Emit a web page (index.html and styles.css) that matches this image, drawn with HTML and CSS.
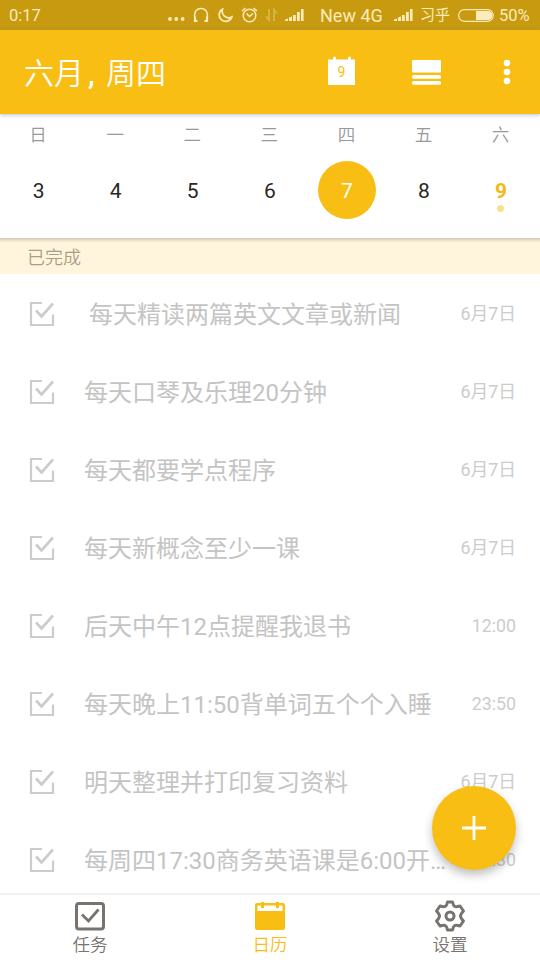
FILE: index.html
```html
<!DOCTYPE html>
<html lang="zh-CN">
<head>
<meta charset="utf-8">
<title>日历</title>
<link rel="stylesheet" href="styles.css">
</head>
<body>
<svg class="defs" width="0" height="0">
  <symbol id="check" viewBox="0 0 26 26"><path d="M13 2H2v22h22V13.500" fill="none" stroke="currentColor" stroke-width="2.200"/><path d="M7 9.500l5.500 6L24 2.500" fill="none" stroke="currentColor" stroke-width="2.700"/></symbol>
  <symbol id="signal" viewBox="0 0 19 14"><path d="M0 13v-1.500l3-1V13zM4 13V9.500l3-1V13zM8 13V7h2.800v6zM12 13V4h2.800v9zM16 13V1h2.600v12z" fill="currentColor"/></symbol>
</svg>
<div class="screen">
  <div class="status">
    <span class="clock">0:17</span>
    <svg class="dots" width="17" height="6" viewBox="0 0 17 6" fill="currentColor"><circle cx="2" cy="3" r="1.900"/><circle cx="8.300" cy="3" r="1.900"/><circle cx="14.600" cy="3" r="1.900"/></svg>
    <svg class="phones" width="16" height="16" viewBox="0 0 16 16" fill="none" stroke="currentColor" stroke-width="1.500"><path d="M2 12.500C.5 5 3.500 1.500 8 1.500s7.500 3.500 6 11"/><path d="M2 9.500v4.500h2.500M14 9.500v4.500h-2.500" stroke-width="2.200"/></svg>
    <svg class="moon" width="15" height="15" viewBox="0 0 15 15" fill="none" stroke="currentColor" stroke-width="1.700"><path d="M4.500 1.200A6.500 6.500 0 1 0 13.800 9C8 11.500 3 7 4.500 1.200z"/></svg>
    <svg class="alarm" width="17" height="16" viewBox="0 0 17 16" fill="none" stroke="currentColor" stroke-width="1.500"><circle cx="8.500" cy="8.500" r="6.300"/><path d="M5.500 6.500l3 3 3.500-3M1 4l3.500-3M16 4l-3.500-3"/></svg>
    <svg class="arrows" width="13" height="14" viewBox="0 0 13 14" fill="none" stroke="currentColor" stroke-width="2"><path d="M4 1v11L1 8.500M9 13V2l3 3.500"/></svg>
    <svg class="sig1" width="19" height="14"><use href="#signal"/></svg>
    <span class="net">New 4G</span>
    <svg class="sig2" width="19" height="14"><use href="#signal"/></svg>
    <span class="carrier">习乎</span>
    <svg class="battery" width="37" height="13" viewBox="0 0 37 13"><rect x=".7" y=".7" width="34.500" height="11.600" rx="5.500" fill="none" stroke="currentColor" stroke-width="1.200"/><path d="M18 2h12a4.500 4.500 0 0 1 0 9H18z" fill="currentColor"/></svg>
    <span class="percent">50%</span>
  </div>
  <header class="appbar">
    <h1>六月<span class="comma">,</span>周四</h1>
    <svg class="today" width="27" height="29" viewBox="0 0 27 29"><path d="M0 3.500h5V2a1.500 1.500 0 0 1 3 0v1.500h12V2a1.500 1.500 0 0 1 3 0v1.500h4V29H0z" fill="#fff"/><text x="13.500" y="21" text-anchor="middle">9</text></svg>
    <svg class="view" width="29" height="25" viewBox="0 0 29 25" fill="#fff"><rect width="29" height="12.500" rx="1"/><rect y="15" width="29" height="3.700" rx="1.500"/><rect y="21" width="29" height="3.700" rx="1.500"/></svg>
    <svg class="more" width="8" height="26" viewBox="0 0 8 26" fill="#fff"><circle cx="4" cy="4" r="3.300"/><circle cx="4" cy="13" r="3.300"/><circle cx="4" cy="22" r="3.300"/></svg>
  </header>
  <section class="week">
    <div class="day"><span class="name">日</span><span class="num">3</span></div>
    <div class="day"><span class="name">一</span><span class="num">4</span></div>
    <div class="day"><span class="name">二</span><span class="num">5</span></div>
    <div class="day"><span class="name">三</span><span class="num">6</span></div>
    <div class="day"><span class="name">四</span><span class="num selected">7</span></div>
    <div class="day"><span class="name">五</span><span class="num">8</span></div>
    <div class="day"><span class="name">六</span><span class="num now">9</span></div>
  </section>
  <main class="tasks">
    <h2>已完成</h2>
    <ul>
      <li><svg class="box"><use href="#check"/></svg><span class="title indented">每天精读两篇英文文章或新闻</span><time>6月7日</time></li>
      <li><svg class="box"><use href="#check"/></svg><span class="title">每天口琴及乐理20分钟</span><time>6月7日</time></li>
      <li><svg class="box"><use href="#check"/></svg><span class="title">每天都要学点程序</span><time>6月7日</time></li>
      <li><svg class="box"><use href="#check"/></svg><span class="title">每天新概念至少一课</span><time>6月7日</time></li>
      <li><svg class="box"><use href="#check"/></svg><span class="title">后天中午12点提醒我退书</span><time>12:00</time></li>
      <li><svg class="box"><use href="#check"/></svg><span class="title">每天晚上11:50背单词五个个入睡</span><time>23:50</time></li>
      <li><svg class="box"><use href="#check"/></svg><span class="title">明天整理并打印复习资料</span><time>6月7日</time></li>
      <li><svg class="box"><use href="#check"/></svg><span class="title">每周四17:30商务英语课是6:00开…</span><time>17:30</time></li>
    </ul>
    <button class="fab" aria-label="添加"><svg width="24" height="24" viewBox="0 0 24 24"><path d="M12 0v24M0 12h24" stroke="#fff" stroke-width="2.800"/></svg></button>
  </main>
  <nav class="tabs">
    <a><svg width="32" height="32" viewBox="0 0 32 32" fill="none" stroke="currentColor" stroke-width="3"><rect x="2.500" y="3.500" width="27" height="25.500" rx="2.500"/><path d="M8 14.500l6.500 6.500L24.500 9.500" stroke-width="2.800"/></svg><span>任务</span></a>
    <a class="active"><svg width="32" height="32" viewBox="0 0 32 32"><path d="M3 3h4V2h3v1h12V2h3v1h4a2 2 0 0 1 2 2v23a2 2 0 0 1-2 2H3a2 2 0 0 1-2-2V5a2 2 0 0 1 2-2z" fill="currentColor"/><path d="M3.500 5.500H7V8h3V5.500h12V8h3V5.500h3.500V11h-25z" fill="#fff"/></svg><span>日历</span></a>
    <a><svg width="32" height="32" viewBox="0 0 32 32" fill="none" stroke="currentColor" stroke-width="3" stroke-linejoin="round"><path d="M13.500 2h5q.8 3.600 2 4.300 1.500.9 5.500-.3l3.500 5q-3 3-3 5t3 5L26 26q-4-1.200-5.500-.3-1.200.7-2 4.300h-5q-.8-3.600-2-4.300-1.500-.9-5.500.3l-3.500-5q3-3 3-5t-3-5L6 6q4 1.200 5.500.3 1.200-.7 2-4.300z"/><circle cx="16" cy="16" r="4"/></svg><span>设置</span></a>
  </nav>
</div>
</body>
</html>
```
FILE: styles.css
```css
* { box-sizing: border-box; }
body {
  margin: 0;
  font-family: Roboto, "Noto Sans CJK SC", sans-serif;
  font-weight: 350;
  background: #fff;
}
h1, h2, ul { margin: 0; padding: 0; font-weight: 350; }
.defs { display: block; }
.screen { width: 540px; height: 960px; display: flex; flex-direction: column; overflow: hidden; }
svg { flex: none; }

.status {
  height: 30px; flex: none; display: flex; align-items: center;
  background: #c79a10; color: #fdebbb;
  font-size: 17px; white-space: nowrap; font-weight: 400;
}
.clock { width: 159px; padding-left: 9px; font-size: 16.500px; }
.dots { margin: 7px 0 0 9px; }
.phones { margin-left: 8px; }
.moon { margin-left: 9px; }
.alarm { margin-left: 8px; }
.arrows { margin-left: 7px; opacity: .3; }
.sig1 { margin-left: 7px; }
.net { width: 66px; margin-left: 16px; font-size: 18px; }
.sig2 { margin-left: 8px; }
.carrier { width: 30px; margin-left: 7px; font-size: 15px; line-height: 20px; margin-top: -1px; }
.battery { margin-left: 8px; }
.percent { margin-left: 4px; font-size: 16.500px; }

.appbar {
  height: 84px; flex: none; display: flex; align-items: center;
  padding-left: 24px; background: #f9be14;
  position: relative; box-shadow: 0 1px 4px #6b8a9a80;
}
.appbar h1 { width: 304px; padding-top: 3px; color: #fff; font-size: 30px; line-height: 40px; white-space: nowrap; }
.comma { display: inline-block; width: 22px; padding-left: 4px; font-weight: 500; }
.today text { font: 400 14px Roboto, sans-serif; fill: #f9be14; }
.today { margin-top: -3px; }
.view { margin-left: 57px; }
.more { margin-left: 62px; }

.week {
  height: 124px; flex: none; display: grid; grid-template-columns: repeat(7, 77.1px);
  background: #fff;
}
.day { display: flex; flex-direction: column; align-items: center; padding-top: 9px; }
.name { font-size: 17.500px; line-height: 24px; color: #999; padding-right: 1px; }
.num {
  width: 58px; height: 58px; margin-top: 14px; padding-top: 2px; border-radius: 50%;
  display: flex; align-items: center; justify-content: center; position: relative;
  color: #2b2620; font-size: 21px; font-weight: 400;
}
.selected { background: #f9be14; color: #fff; }
.now { color: #f3b915; font-weight: 700; }
.now::after {
  content: ""; position: absolute; left: 25px; top: 44px;
  width: 7px; height: 7px; border-radius: 50%; background: #fbdf90;
}

.tasks { height: 655px; flex: none; position: relative; overflow: hidden; }
.tasks h2 {
  height: 36px; padding-left: 27px;
  background: linear-gradient(#cfc4b4, #f3e9d2 3px, #fef5dc 5px);
  color: #a89f8a; font-size: 18px; line-height: 39px;
}
.tasks ul { list-style: none; }
.tasks li { height: 78px; display: flex; align-items: center; padding: 3px 24px 0 29px; white-space: nowrap; color: #c4c4c4; font-weight: 400; }
.box { width: 26px; height: 26px; color: #ccc; margin-top: -2px; }
.title { flex: 1; margin-left: 29px; font-size: 24px; line-height: 32px; }
.indented { margin-left: 34px; }
time { font-size: 17.800px; line-height: 26px; color: #ccc; margin-top: -1px; }
.fab {
  position: absolute; left: 432px; top: 548px; width: 84px; height: 84px;
  border: 0; padding: 0; border-radius: 50%; background: #f9be14;
  display: flex; align-items: center; justify-content: center;
  box-shadow: 0 5px 10px #00000040;
}

.tabs { height: 67px; flex: none; display: grid; grid-template-columns: repeat(3, 1fr); border-top: 2px solid #f1f1f1; background: #fff; }
.tabs a { display: flex; flex-direction: column; align-items: center; padding-top: 5px; color: #78736e; }
.tabs span { font-size: 17.500px; line-height: 27px; }
.tabs .active { color: #f9be14; }
```
